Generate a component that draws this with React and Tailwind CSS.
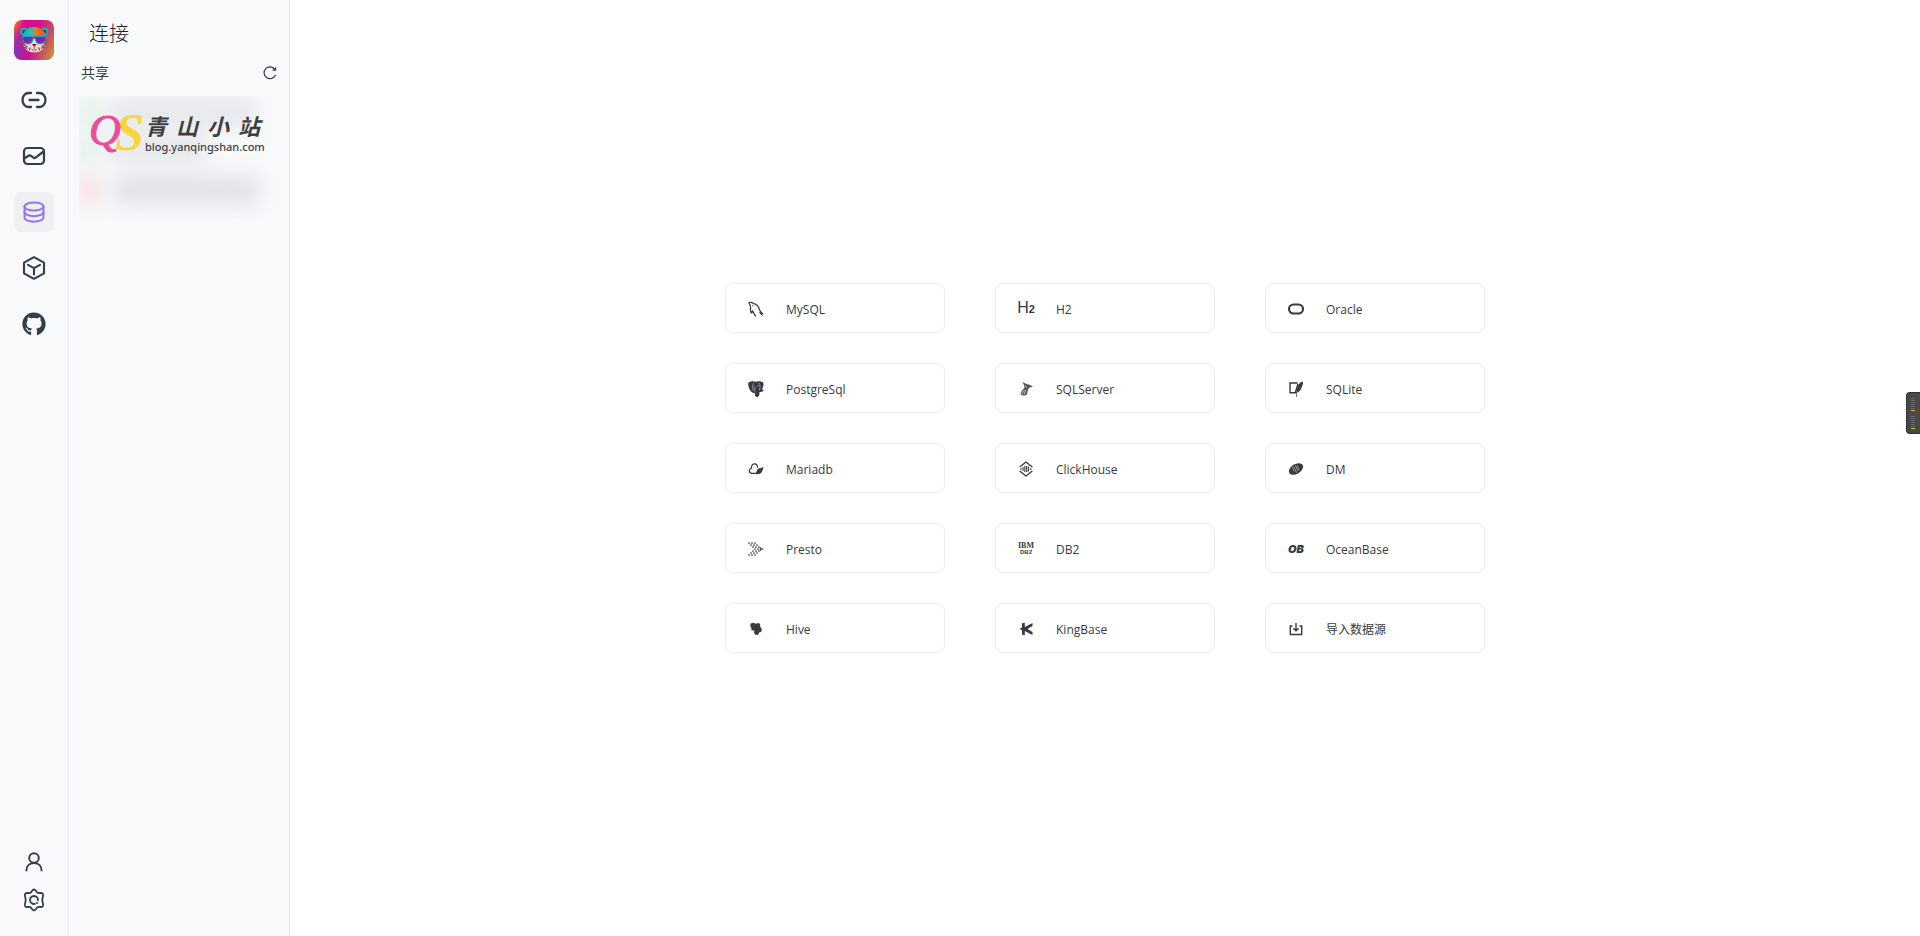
import React from "react";
import { FaGithub } from "react-icons/fa";

const stroke = { fill: "none", stroke: "currentColor", strokeLinecap: "round", strokeLinejoin: "round" };

function PandaLogo() {
  return (
    <svg viewBox="0 0 40 40" className="size-10 rounded-lg" role="img" aria-label="Chat2DB">
      <defs>
        <linearGradient id="bg" x1="0" y1="0" x2="1" y2="0.35">
          <stop offset="0" stopColor="#f58a1c" />
          <stop offset="0.25" stopColor="#e0088f" />
          <stop offset="0.6" stopColor="#d3128c" />
          <stop offset="1" stopColor="#c9545f" />
        </linearGradient>
        <linearGradient id="low" x1="0" y1="0.6" x2="1" y2="0.9">
          <stop offset="0" stopColor="#6a45c5" />
          <stop offset="0.45" stopColor="#c8148f" stopOpacity="0.5" />
          <stop offset="1" stopColor="#c8a02c" />
        </linearGradient>
        <linearGradient id="fade" x1="0" y1="0" x2="0" y2="1">
          <stop offset="0.15" stopColor="#000" />
          <stop offset="0.8" stopColor="#fff" />
        </linearGradient>
        <mask id="m"><rect width="40" height="40" fill="url(#fade)" /></mask>
        <linearGradient id="fur" x1="0" y1="0" x2="1" y2="0">
          <stop offset="0" stopColor="#10b6c4" />
          <stop offset="0.42" stopColor="#2cc4a8" />
          <stop offset="0.55" stopColor="#f07a20" />
          <stop offset="0.8" stopColor="#f0592a" />
          <stop offset="1" stopColor="#18b8c8" />
        </linearGradient>
        <linearGradient id="lens" x1="0" y1="0" x2="1" y2="1">
          <stop offset="0" stopColor="#4b2bb8" />
          <stop offset="0.6" stopColor="#8d1fa8" />
          <stop offset="1" stopColor="#1597c8" />
        </linearGradient>
      </defs>
      <rect width="40" height="40" fill="url(#bg)" />
      <rect width="40" height="40" fill="url(#low)" mask="url(#m)" />
      <circle cx="10" cy="11.5" r="4" fill="#16a9b8" />
      <circle cx="10.3" cy="12" r="2" fill="#5a1c50" />
      <circle cx="30.5" cy="11.5" r="4" fill="#16a9b8" />
      <circle cx="30.2" cy="12" r="2" fill="#5a1c50" />
      <path d="M7.5 20C7.5 12 13 7.5 20.3 7.5S33 12 33 20c0 7-6 12.5-12.7 12.5S7.500 27 7.500 20Z" fill="#8f4f55" />
      <path d="M8 19C8.500 11.500 14 7 20.300 7S32 11.500 32.600 19L20 16Z" fill="url(#fur)" />
      <path d="M9 24l6-1 3-4h4.500l3 4 6.500 1c-1.500 5-6 8.500-11.700 8.500S10.500 29 9 24Z" fill="#ecd9d2" />
      <path d="M9 24l4.500 3M9.500 27l4 1.500M32 24l-4.500 3M31 27l-4 1.500M15 30.500l1.500-3M26 30.500l-1.500-3" stroke="#8b3548" strokeWidth="1.100" />
      <path d="M8.500 16.500h11l-1 5q-1 2.500-4 2.500c-4 0-6-3-6-7.500Z" fill="url(#lens)" stroke="#12a3cf" strokeWidth="0.900" />
      <path d="M21 16.500h11c0 4.500-2 7.500-6 7.500q-3 0-4-2.500Z" fill="url(#lens)" stroke="#12a3cf" strokeWidth="0.900" />
      <path d="M18 24h4.600l-2.300 3Z" fill="#7a1420" />
      <path d="M20.300 27v2M17.500 29.500q2.800 1.500 5.600 0" fill="none" stroke="#a2444a" strokeWidth="0.900" />
    </svg>
  );
}

function LinkIcon() {
  return (
    <svg viewBox="0 0 26 18" className="h-[18px] w-[26px]" {...stroke} strokeWidth="2.300" aria-hidden="true">
      <path d="M10 2H7.500a6 7 0 0 0 0 14H10M16 2h2.500a6 7 0 0 1 0 14H16M8.500 9h9" />
    </svg>
  );
}

function ChartIcon() {
  return (
    <svg viewBox="0 0 24 20" className="h-5 w-6" {...stroke} strokeWidth="2.200" aria-hidden="true">
      <rect x="2" y="2" width="20" height="16" rx="3.500" />
      <path d="M3 12l4-2.500q1-.5 2 .3l2.500 1.900q1 .8 2 0L21 6" />
    </svg>
  );
}

function DatabaseIcon() {
  return (
    <svg viewBox="0 0 22 22" className="size-[22px]" {...stroke} strokeWidth="1.900" aria-hidden="true">
      <ellipse cx="11" cy="5.500" rx="9.500" ry="4" />
      <path d="M1.500 5.500v11c0 2.300 4.200 4.200 9.500 4.200s9.500-1.900 9.500-4.200v-11" />
      <path d="M1.500 11c0 2.300 4.200 4.200 9.500 4.200s9.500-1.900 9.500-4.200" />
    </svg>
  );
}

function CubeIcon() {
  return (
    <svg viewBox="0 0 24 24" className="size-6" {...stroke} strokeWidth="2.100" aria-hidden="true">
      <path d="M12 1.200l10 5.500v10.600l-10 5.500-10-5.500V6.700Z" />
      <path d="M6 8.800l6 3.400 6-3.400M12 12.200V18.500" />
    </svg>
  );
}

function UserIcon() {
  return (
    <svg viewBox="0 0 20 20" className="size-5" {...stroke} strokeLinecap="butt" strokeWidth="1.900" aria-hidden="true">
      <circle cx="10" cy="6" r="4.800" />
      <path d="M2.300 19.200c0-5 3-8.200 7.700-8.200s7.700 3.200 7.700 8.200" />
    </svg>
  );
}

function GearIcon() {
  return (
    <svg viewBox="0 0 24 24" className="size-6" {...stroke} strokeWidth="1.800" aria-hidden="true">
      <path d="M12 1.500C13.800 1.500 14.300 4.300 15.800 4.900C17.300 5.500 19.600 4.200 20.800 5.800C22 7.500 20.300 9.300 20.300 12C20.300 14.700 22 16.500 20.800 18.200C19.600 19.800 17.300 18.500 15.800 19.100C14.300 19.700 13.800 22.500 12 22.500C10.200 22.500 9.700 19.700 8.200 19.100C6.700 18.500 4.400 19.800 3.200 18.200C2 16.500 3.700 14.700 3.700 12C3.700 9.300 2 7.500 3.200 5.800C4.400 4.200 6.700 5.500 8.200 4.900C9.700 4.300 10.200 1.500 12 1.500Z" />
      <path d="M12.900 15.900A4 4 0 1 1 16 12.300" />
      <circle cx="15" cy="14.900" r="1" fill="currentColor" stroke="none" />
    </svg>
  );
}

function RefreshIcon() {
  return (
    <svg viewBox="0 0 14 14" className="size-3.5" {...stroke} strokeWidth="1.200" aria-hidden="true">
      <path d="M12.300 9.300A5.900 5.900 0 1 1 11.800 3.400" />
      <path d="M13 1.600l-.2 3-3-.3Z" fill="currentColor" strokeWidth="0.500" />
    </svg>
  );
}

function Glyph({ children }) {
  return (
    <svg viewBox="0 0 16 16" className="size-4 overflow-visible" fill="currentColor" aria-hidden="true">
      {children}
    </svg>
  );
}

const MySql = () => (
  <Glyph>
    <path {...stroke} strokeWidth="1.250" d="M1 1.500c2-.5 3.500.3 4.500 1.100 3 .3 5 2.900 6 6.100.6 1.700 1.600 2.500 2.600 3.700M1 1.500c0 1.500 1.200 2.400 1.500 4 .3 1.900-.5 3 .3 5.500.5 1.500 1.200 1 1.500-1.200 1.200 1.200 1.500 3.400 3.200 5" />
    <path d="M10.800 11.300c1.800 0 3-.3 4.900 1.500l-1.700.5 1.500 1.900c-1.700-.3-3.200-2-4.700-3.900Z" />
    <circle cx="4.800" cy="4.700" r="0.600" />
  </Glyph>
);

const H2 = () => (
  <span className="flex items-baseline font-['Liberation_Sans',sans-serif] leading-4" aria-hidden="true">
    <span className="text-base leading-4">H</span>
    <span className="text-[11px] leading-4 font-bold">2</span>
  </span>
);

const Oracle = () => (
  <Glyph>
    <rect x="1" y="3.500" width="14" height="9" rx="4.500" fill="none" stroke="currentColor" strokeWidth="2.100" />
  </Glyph>
);

const Postgres = () => (
  <Glyph>
    <path d="M3 .6C5 0 6 .3 7.500.8 9 .2 12.500-.3 14.600 1c1.600 1.500 1 4-.6 7.600l1.800.4c-.5 1.700-2.300 2.100-4.300 1.900-.1 2.300.1 4.600-2.200 5-2.500.3-2.400-2-2.600-4.400-1 .8-2 .6-2.600-.2C2 10 .2 5.500.2 3.200.3 1.600 1.400.9 3 .6Z" />
    <path d="M5.200 9.500C4.500 7 4.600 4.500 5.500 2.200M10.800 1.800c1.600 1.800 1.700 4.800.5 7.400M6.900 10.600c0-2-.2-3.100-.1-4.700M8.800 5.300c.9-.5 1.600-.5 2.200 0" fill="none" stroke="#fff" strokeWidth="0.600" opacity="0.850" />
  </Glyph>
);

const SqlServer = () => (
  <Glyph>
    <path d="M4 1.300c2 .3 3 1.300 4.700 1.800 2.500.5 4.300.9 6.300 3-2.200-.3-3.300.2-4.600 1.600-.8 2-.6 4.300-1.900 6-1.500 1.500-4.500 1-6-.4.300-2.800 2.500-4.500 3.900-6.500C6.600 5.100 6 2.800 4 1.300Z" opacity="0.850" />
    <path d="M3.600 13l3-4M6 13.500L8 9M7.500 4.500l1 2" fill="none" stroke="#fff" strokeWidth="0.600" />
  </Glyph>
);

const Sqlite = () => (
  <Glyph>
    <path d="M9.500 2H2v9.800h6.500M10 2.800L7.500 11" fill="none" stroke="currentColor" strokeWidth="1.400" />
    <path d="M14.800.5c-2 0-4.200 2.200-5.300 5.500-.6 2-1 3.800-1.200 5.500h1.500c1-.8 2.500-1.800 3.500-4 1-2.500 2.200-5.500 1.500-7Z" />
    <path d="M8.300 11l.3 5" stroke="currentColor" strokeWidth="0.700" />
  </Glyph>
);

const Mariadb = () => (
  <Glyph>
    <path {...stroke} strokeWidth="1.200" d="M9.500 12.300H4.200C.6 12.300.5 8.300 3.500 7.300 3.300 1.500 9.200 1.500 9.600 6.300" />
    <path d="M3.500 7.500l1.200 2M7 12.800C8.500 12.500 8.700 8.500 10.500 7.600c1.300-.5 2.300.6 4.800-2 0 2.700-.8 5.200-2.800 6.900-1.500 1-4 .6-5.500.3Z" />
  </Glyph>
);

const ClickHouse = () => (
  <Glyph>
    <path {...stroke} strokeWidth="1.300" d="M2 5.700l6-4.700 6 4.700M2 10.300L8 15l6-4.700" />
    <path d="M4.500 6h1.100v4H4.500zM6.300 5h1.100v6H6.300zM8.100 5h1.100v6H8.100zM9.900 5.500H11v5H9.900zM2.500 7.300h1.200v1.400H2.500zM11.900 7.300h1.500v1.400h-1.500z" />
  </Glyph>
);

const Dm = () => (
  <Glyph>
    <g transform="rotate(-32 8 8)">
      <ellipse cx="8" cy="8" rx="7.800" ry="4.900" />
      <path d="M6 4l-1 5M7.500 4.500l-1 7M9.500 4.500L8.500 11M11 5.500l-1 5" stroke="#fff" strokeWidth="0.600" opacity="0.700" />
    </g>
  </Glyph>
);

const prestoDots = [
  [1, 2], [4, 2], [7, 2],
  [3, 4], [6, 4], [9, 4],
  [5, 6], [8, 6], [11, 6],
  [7, 8], [10, 8], [13, 8],
  [5, 10], [8, 10], [11, 10],
  [3, 12], [6, 12], [9, 12],
  [1, 14], [4, 14], [7, 14],
  [14.500, 8], [12.500, 7], [12.500, 9],
];

const Presto = () => (
  <Glyph>
    {prestoDots.map(([x, y]) => (
      <circle key={`${x}-${y}`} cx={x} cy={y} r="0.850" />
    ))}
  </Glyph>
);

const Db2 = () => (
  <span className="flex flex-col items-center font-bold" aria-hidden="true">
    <span className="font-['Liberation_Serif',serif] text-[8px] leading-[7px]">IBM</span>
    <span className="font-['Liberation_Sans',sans-serif] text-[6px] leading-[6px]">DB2</span>
  </span>
);

const OceanBase = () => (
  <span className="font-['Inter','Liberation_Sans',sans-serif] text-[11px] leading-4 font-black italic" aria-hidden="true">
    OB
  </span>
);

const Hive = () => (
  <Glyph>
    <path d="M2.500 2.600l3-.8 2.500 1 2.500-.8 1.500 1 .3 3 1.700 2.400-1 2.600-2 .5-.5 2-2.500.5L6 12l.3-2.500-3-.3.2-2L2.300 5.500Z" />
  </Glyph>
);

const KingBase = () => (
  <Glyph>
    <path d="M4 2.300l2.800-.5v4.300L14.500 2v3L9.500 8l5 3v3L6.800 10v4.200L4 13.600V9.300L1.500 7.700 4 6.600Z" />
  </Glyph>
);

const ImportIcon = () => (
  <Glyph>
    <path fill="none" stroke="currentColor" strokeWidth="1.400" d="M4.500 5H2.300v8.500h11.400V5h-2.200M8 2v7.500M5.300 7.300L8 9.800l2.700-2.500" />
  </Glyph>
);

const sources = [
  { name: "MySQL", Icon: MySql },
  { name: "H2", Icon: H2 },
  { name: "Oracle", Icon: Oracle },
  { name: "PostgreSql", Icon: Postgres },
  { name: "SQLServer", Icon: SqlServer },
  { name: "SQLite", Icon: Sqlite },
  { name: "Mariadb", Icon: Mariadb },
  { name: "ClickHouse", Icon: ClickHouse },
  { name: "DM", Icon: Dm },
  { name: "Presto", Icon: Presto },
  { name: "DB2", Icon: Db2 },
  { name: "OceanBase", Icon: OceanBase },
  { name: "Hive", Icon: Hive },
  { name: "KingBase", Icon: KingBase },
  { name: "导入数据源", Icon: ImportIcon },
];

const navItems = [
  { label: "Connections", icon: <LinkIcon /> },
  { label: "Dashboard", icon: <ChartIcon /> },
  { label: "Workspace", icon: <DatabaseIcon />, active: true },
  { label: "Team", icon: <CubeIcon /> },
];

function NavBar() {
  return (
    <nav className="flex w-[69px] shrink-0 flex-col items-center justify-between border-r border-[#e5e7ec] bg-[#f7f9fb] pt-5 pb-6 text-[#363d4a]">
      <div className="flex flex-col items-center gap-5">
        <PandaLogo />
        <div className="flex flex-col gap-4">
          {navItems.map(({ label, icon, active }) => (
            <button
              key={label}
              type="button"
              aria-label={label}
              className={
                active
                  ? "flex size-10 items-center justify-center rounded-lg bg-[#eef0f2] text-[#9373ee]"
                  : "flex size-10 items-center justify-center rounded-lg"
              }
            >
              {icon}
            </button>
          ))}
          <a href="#github" aria-label="GitHub" className="flex size-10 items-center justify-center">
            <FaGithub className="size-6" />
          </a>
        </div>
      </div>
      <div className="flex flex-col items-center gap-4">
        <button type="button" aria-label="Account">
          <UserIcon />
        </button>
        <button type="button" aria-label="Settings">
          <GearIcon />
        </button>
      </div>
    </nav>
  );
}

function SiteMark() {
  return (
    <div className="relative flex items-center gap-0.5 pt-3.5 pl-2.5">
      <svg viewBox="0 0 54 44" className="h-11 w-[54px] shrink-0 overflow-visible font-['Liberation_Serif',serif] italic" role="img" aria-label="QS">
        <text x="26" y="40" fontSize="52" fontWeight="700" fill="#fad443">S</text>
        <text x="0" y="35" fontSize="44" fill="#ee4a9d" stroke="#ee4a9d" strokeWidth="1">Q</text>
      </svg>
      <div className="flex flex-col gap-0.5 text-[#3f3f41]">
        <div className="flex gap-[9px] font-['Noto_Sans_CJK_SC',sans-serif] text-[22px] leading-7 font-bold italic">
          <span>青</span>
          <span>山</span>
          <span>小</span>
          <span>站</span>
        </div>
        <span className="font-['Noto_Sans',sans-serif] text-[11px] leading-3 font-medium">blog.yanqingshan.com</span>
      </div>
    </div>
  );
}

function SharedPanel() {
  return (
    <aside className="flex w-[221px] shrink-0 flex-col border-r border-[#e2e4e9] bg-[#f7f9fb]">
      <h1 className="pt-5 pl-5 text-xl leading-7 font-light text-[#1f2228]">连接</h1>
      <div className="mt-3.5 flex items-center justify-between px-3">
        <h2 className="text-sm leading-[22px]">共享</h2>
        <button type="button" aria-label="刷新">
          <RefreshIcon />
        </button>
      </div>
      <div className="relative mx-2.5 mt-3 h-[124px] overflow-hidden">
        <div className="absolute inset-0 flex flex-col gap-2 blur-[10px]" aria-hidden="true">
          <div className="flex gap-3">
            <span className="h-8 w-5 bg-[#e0efe4]" />
            <span className="h-8 w-36 bg-[#e6e8eb]" />
          </div>
          <div className="flex gap-3">
            <span className="h-7 w-5 bg-[#e0efe4]" />
            <span className="h-7 w-24 bg-[#e6e8eb]" />
          </div>
          <div className="mt-1 flex items-center gap-4">
            <span className="h-7 w-5 bg-[#fbd9de]" />
            <span className="h-7 w-36 bg-[#dfe1e5]" />
          </div>
        </div>
        <SiteMark />
      </div>
    </aside>
  );
}

const greyBars = [0, 1, 2, 3, 4, 5];
const channels = [
  { id: "upper", accent: "h-px w-1 bg-[#f9a11b]" },
  { id: "lower", accent: "h-px w-1 bg-[#8fe51a]" },
];

function LevelMeter() {
  return (
    <div className="fixed top-[392px] right-0 flex h-[42px] w-3.5 flex-col gap-[5px] rounded-l-sm border border-r-0 border-[#333] bg-[#484848] pt-[5px] pl-1" aria-hidden="true">
      {channels.map(({ id, accent }) => (
        <div key={id} className="flex flex-col gap-px">
          {greyBars.map((i) => (
            <span key={i} className="h-px w-1 bg-[#696969]" />
          ))}
          <span className={accent} />
        </div>
      ))}
    </div>
  );
}

export default function App() {
  return (
    <div className="flex min-h-screen bg-white font-['Open_Sans','Noto_Sans_CJK_SC',sans-serif] text-[#36393f]">
      <NavBar />
      <SharedPanel />
      <main className="flex flex-1 items-center justify-center">
        <div className="grid grid-cols-3 gap-x-[50px] gap-y-[30px]">
          {sources.map(({ name, Icon }) => (
            <button
              key={name}
              type="button"
              className="flex h-[50px] w-[220px] items-center gap-5 rounded-lg border border-[#ebecee] pt-px pl-5 text-left text-xs"
            >
              <span className="flex w-5 shrink-0 justify-center">
                <Icon />
              </span>
              <span className="pt-0.5">{name}</span>
            </button>
          ))}
        </div>
      </main>
      <LevelMeter />
    </div>
  );
}
